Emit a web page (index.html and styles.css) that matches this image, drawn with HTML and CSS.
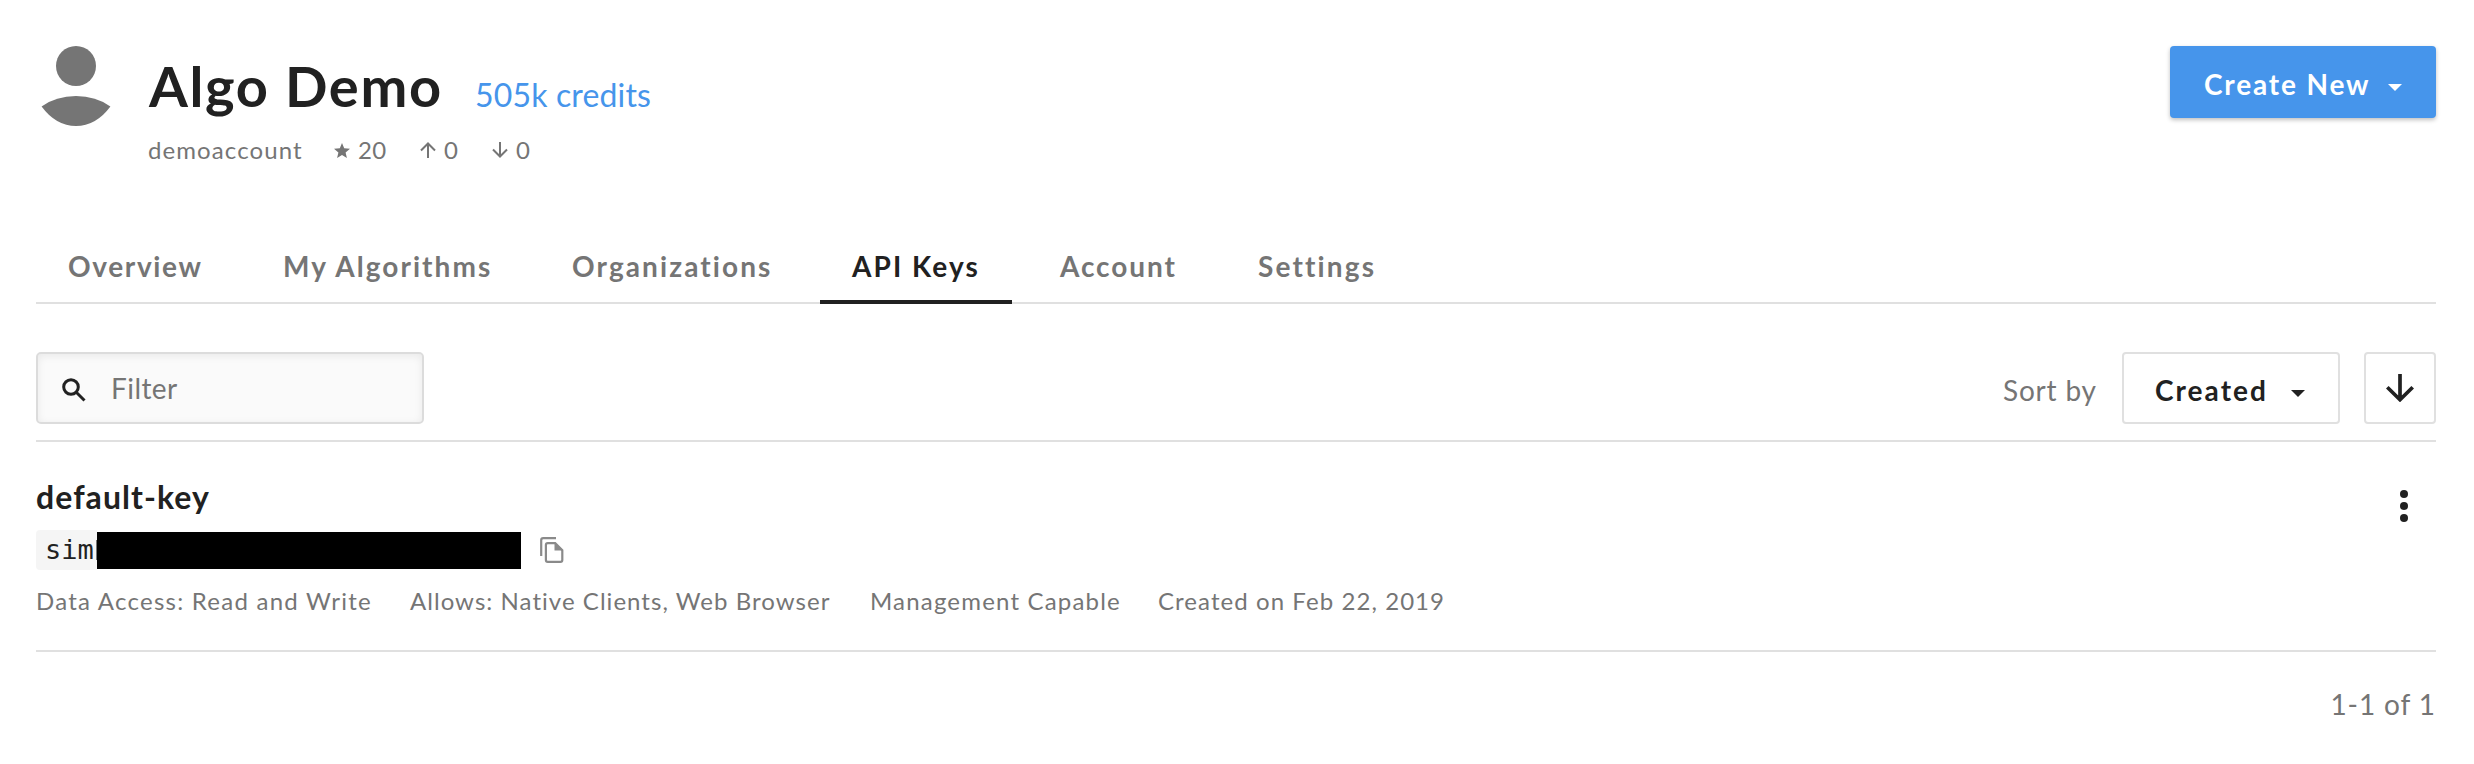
FILE: index.html
```html
<!DOCTYPE html>
<html lang="en">
<head>
<meta charset="utf-8">
<title>Algo Demo - API Keys</title>
<link rel="stylesheet" href="styles.css">
</head>
<body>
<div class="page">
  <header class="profile">
    <svg class="avatar" viewBox="0 0 80 80" width="80" height="80"><circle cx="40" cy="20" r="20"/><path d="M5.600 60.500Q20 50 40 50T74.400 60.500Q60 80 40 80T5.600 60.500Z"/></svg>
    <div class="identity">
      <div class="title-row">
        <h1 class="name">Algo Demo</h1>
        <a class="credits">505k credits</a>
      </div>
      <div class="stats">
        <span class="username">demoaccount</span>
        <span class="stat stars"><svg viewBox="0 0 16 15" width="16" height="15"><path fill="currentColor" d="M8 0l2.200 5.300 5.800.5-4.400 3.800L12.900 15 8 12.100 3.100 15l1.300-5.400L0 5.800l5.800-.5z"/></svg>20</span>
        <span class="stat ups"><svg viewBox="0 0 16 16" width="16" height="16"><path d="M8 16V1.500M1 8.500l7-7 7 7"/></svg>0</span>
        <span class="stat downs"><svg viewBox="0 0 16 16" width="16" height="16"><path d="M8 0v14.500M1 7.500l7 7 7-7"/></svg>0</span>
      </div>
    </div>
    <button class="create"><span>Create New</span><i class="caret"></i></button>
  </header>

  <nav class="tabs">
    <a class="tab overview">Overview</a>
    <a class="tab algorithms">My Algorithms</a>
    <a class="tab organizations">Organizations</a>
    <a class="tab active">API Keys</a>
    <a class="tab account">Account</a>
    <a class="tab settings">Settings</a>
  </nav>

  <div class="toolbar">
    <div class="filter">
      <svg viewBox="0 0 24 24" width="24" height="24"><circle cx="9" cy="9" r="7.300"/><path d="M14.500 14.500l8 8"/></svg>
      <span>Filter</span>
    </div>
    <div class="sort">
      <span class="sort-label">Sort by</span>
      <button class="select"><span>Created</span><i class="caret"></i></button>
      <button class="direction"><svg viewBox="0 0 28 28" width="28" height="28"><path d="M14 0v25.500M1.300 13.200L14 25.700l12.700-12.500"/></svg></button>
    </div>
  </div>

  <section class="key">
    <div class="key-info">
      <h2 class="key-name">default-key</h2>
      <div class="secret-row">
        <code class="secret"><span>sim</span><i class="redacted"></i></code>
        <svg class="copy" viewBox="0 0 24 26" width="24" height="26"><path class="outline" d="M1.200 19V3.200q0-2 2-2H16M7.700 6.200h7.500l7.100 7V23q0 1.800-1.800 1.800H7.700q-1.800 0-1.800-1.800V8q0-1.800 1.800-1.800z"/><path class="fold" d="M14.500 5.500v8h8z"/></svg>
      </div>
      <div class="meta">
        <span class="access">Data Access: Read and Write</span>
        <span class="allows">Allows: Native Clients, Web Browser</span>
        <span class="manage">Management Capable</span>
        <span class="created">Created on Feb 22, 2019</span>
      </div>
    </div>
    <svg class="menu" viewBox="0 0 8 32" width="8" height="32"><circle cx="4" cy="4" r="4"/><circle cx="4" cy="16" r="4"/><circle cx="4" cy="28" r="4"/></svg>
  </section>
  <footer class="count">1-1 of 1</footer>
</div>
</body>
</html>
```
FILE: styles.css
```css
* { box-sizing: border-box; }
body {
  margin: 0;
  background: #fff;
  color: #757575;
  font-family: Lato, "Open Sans", sans-serif;
  font-size: 28px;
  line-height: 34px;
  font-variant-ligatures: none;
  font-kerning: normal;
}
button { font: inherit; padding: 0; }
h1, h2 { margin: 0; }
svg { display: block; flex: none; }
.page { height: 764px; padding: 46px 38px 0 36px; }

.profile { display: flex; align-items: flex-start; height: 182px; }
.avatar { fill: #757575; }
.identity { flex: 1; padding: 6px 0 0 33px; }
.title-row { display: flex; align-items: baseline; height: 68px; }
.name { width: 326px; color: #212121; font-size: 56px; line-height: 68px; font-weight: 700; letter-spacing: 1.67px; }
.credits { color: #4695eb; font-size: 32px; letter-spacing: .15px; }
.stats { display: flex; align-items: center; margin-top: 16px; font-size: 24px; line-height: 28px; white-space: nowrap; }
.username { width: 186px; margin-left: -1px; letter-spacing: 1.09px; }
.stat { display: flex; align-items: center; gap: 8px; letter-spacing: .3px; }
.stat svg { fill: none; stroke: currentColor; stroke-width: 2; }
.stars { width: 86px; }
.stars svg { stroke: none; }
.ups { width: 72px; }

.caret { border: 7px solid transparent; border-top-color: currentColor; border-bottom: 0; }
.create {
  display: flex;
  align-items: center;
  width: 266px;
  height: 72px;
  padding-left: 34px;
  border: 0;
  border-radius: 4px;
  background: #4695eb;
  color: #fff;
  font-weight: 700;
  letter-spacing: 1.84px;
  box-shadow: 0 2px 4px rgba(0, 0, 0, .25);
}
.create span { width: 184px; text-align: left; margin-top: 4px; }
.create .caret { margin-top: 11px; }

.tabs {
  display: grid;
  grid-template-columns: 199px 273px 264px 192px 181px 182px;
  gap: 16px;
  height: 76px;
  border-bottom: 2px solid #e0e0e0;
}
.tab { height: 76px; padding: 21px 0 0 32px; font-weight: 700; white-space: nowrap; }
.overview { letter-spacing: 1.65px; }
.algorithms { letter-spacing: 2.05px; }
.organizations { letter-spacing: 2.1px; }
.active { padding-left: 32px; border-bottom: 4px solid #212121; color: #212121; letter-spacing: 2.05px; }
.account { padding-left: 32px; letter-spacing: 1.9px; }
.settings { padding-left: 33px; letter-spacing: 2.15px; }

.toolbar {
  display: flex;
  justify-content: space-between;
  height: 90px;
  margin-top: 48px;
  border-bottom: 2px solid #e0e0e0;
}
.filter {
  display: flex;
  align-items: center;
  width: 388px;
  height: 72px;
  padding-left: 24px;
  border: 2px solid #dcdcdc;
  border-radius: 5px;
  background: #fafafa;
  box-shadow: inset 0 2px 8px rgba(0, 0, 0, .07);
}
.filter svg { margin-top: 3px; fill: none; stroke: #212121; stroke-width: 3; }
.filter span { margin: 0 0 0 25px; letter-spacing: .45px; }
.sort { display: flex; align-items: center; height: 72px; }
.sort-label { width: 119px; margin-top: 4px; letter-spacing: .8px; }
.select {
  display: flex;
  align-items: center;
  width: 218px;
  height: 72px;
  padding-left: 31px;
  margin-right: 24px;
  border: 2px solid #e0e0e0;
  border-radius: 4px;
  background: #fff;
  color: #212121;
  font-weight: 700;
  letter-spacing: 2.04px;
}
.select span { width: 136px; margin-top: 4px; text-align: left; }
.select .caret { margin-top: 11px; }
.direction {
  display: flex;
  align-items: center;
  justify-content: center;
  width: 72px;
  height: 72px;
  border: 2px solid #e0e0e0;
  border-radius: 4px;
  background: #fff;
}
.direction svg { fill: none; stroke: #212121; stroke-width: 3.7; }

.key {
  display: flex;
  justify-content: space-between;
  height: 210px;
  padding: 36px 28px 0 0;
  border-bottom: 2px solid #e0e0e0;
}
.key-name { color: #212121; font-size: 32px; line-height: 38px; letter-spacing: 1.06px; }
.secret-row { display: flex; align-items: center; gap: 19px; margin-top: 14px; }
.secret {
  display: flex;
  width: 485px;
  height: 40px;
  padding: 1px 0 0 9px;
  border-radius: 4px;
  background: linear-gradient(90deg, #f5f5f5 61px, #fff 61px);
  color: #212121;
  font: 28px/38px "DejaVu Sans Mono", "Liberation Mono", monospace;
}
.secret span { width: 52px; letter-spacing: 0; font-size: 27px; }
.redacted { position: relative; width: 424px; height: 37px; margin-top: 1px; background: #000; }
.redacted::before { content: ""; position: absolute; left: -1px; top: 8px; width: 1px; height: 20px; background: #777; }
.copy { margin-top: 0; }
.outline { fill: none; stroke: #8a8a8a; stroke-width: 2.200; }
.fold { fill: #8a8a8a; }
.meta { display: flex; margin-top: 17px; font-size: 24px; line-height: 28px; white-space: nowrap; }
.access { width: 374px; letter-spacing: 1.25px; }
.allows { width: 460px; letter-spacing: 1.04px; }
.manage { width: 288px; letter-spacing: 1.18px; }
.created { letter-spacing: 1.07px; }
.menu { margin-top: 12px; fill: #212121; }
.count { padding-top: 35px; text-align: right; letter-spacing: .9px; }
```
